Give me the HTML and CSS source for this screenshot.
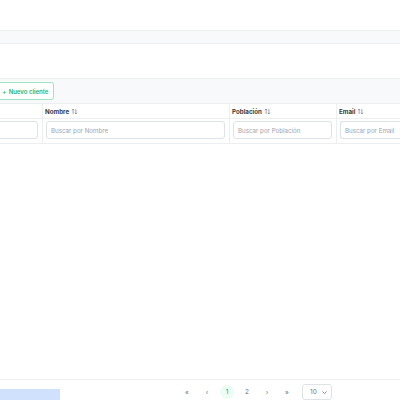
FILE: index.html
```html
<!DOCTYPE html>
<html lang="es">
<head>
<meta charset="utf-8">
<title>Clientes</title>
<link rel="stylesheet" href="styles.css">
</head>
<body>
<div class="page">
  <div class="gap-top"></div>
  <div class="strip"></div>
  <div class="gap-mid"></div>
  <div class="table">
    <div class="toolbar">
      <button class="btn-new"><span class="plus">+</span><span>Nuevo cliente</span></button>
    </div>
    <div class="grid">
      <div class="th"></div>
      <div class="th">Nombre <svg class="sort" viewBox="0 0 10 10"><path d="M3 8.5V1.5M1.3 3.2L3 1.5L4.7 3.2M7 1.5V8.5M5.3 6.8L7 8.5L8.7 6.8"/></svg></div>
      <div class="th">Población <svg class="sort" viewBox="0 0 10 10"><path d="M3 8.5V1.5M1.3 3.2L3 1.5L4.7 3.2M7 1.5V8.5M5.3 6.8L7 8.5L8.7 6.8"/></svg></div>
      <div class="th">Email <svg class="sort" viewBox="0 0 10 10"><path d="M3 8.5V1.5M1.3 3.2L3 1.5L4.7 3.2M7 1.5V8.5M5.3 6.8L7 8.5L8.7 6.8"/></svg></div>
      <div class="tf"><div class="input"></div></div>
      <div class="tf"><div class="input">Buscar por Nombre</div></div>
      <div class="tf"><div class="input">Buscar por Población</div></div>
      <div class="tf last"><div class="input open">Buscar por Email</div></div>
    </div>
  </div>
  <div class="fill"></div>
  <div class="footer">
    <div class="blue"></div>
    <div class="pager">
      <span class="pg">«</span>
      <span class="pg">‹</span>
      <span class="pg active">1</span>
      <span class="pg">2</span>
      <span class="pg">›</span>
      <span class="pg">»</span>
      <span class="rows">10 <svg class="chev" viewBox="0 0 10 10"><path d="M2 3.5L5 6.5L8 3.5"/></svg></span>
    </div>
  </div>
</div>
</body>
</html>
```

FILE: styles.css
```css
html, body {
  margin: 0;
  padding: 0;
  background: #ffffff;
  overflow: hidden;
}
body {
  font-family: Inter, "Noto Sans", sans-serif;
  color: #495057;
}
.page {
  height: 400px;
  width: 400px;
  overflow: hidden;
  display: flex;
  flex-direction: column;
}
.gap-top {
  height: 30px;
}
.strip {
  height: 12px;
  background: #f8f9fa;
  border-top: 1px solid #eceef0;
  border-bottom: 1px solid #eceef0;
}
.gap-mid {
  height: 34px;
}
.table {
  margin-left: -30px;
  width: 430px;
  overflow: hidden;
}
.toolbar {
  background: #f8f9fa;
  border-top: 1px solid #eceef0;
  border-bottom: 1px solid #eceef0;
  padding: 3px 0 3px 0;
  display: flex;
}
.btn-new {
  margin: 0;
  height: 18px;
  width: 84px;
  padding: 0 0 0 31px;
  display: flex;
  align-items: center;
  gap: 2px;
  border: 1px solid #9fe3c4;
  border-radius: 3px;
  background: #ffffff;
  color: #22b573;
  font-family: Inter, "Noto Sans", sans-serif;
  font-size: 6px;
  font-weight: 600;
}
.plus {
  font-weight: 400;
  font-size: 7px;
}
.grid {
  display: grid;
  grid-template-columns: 72px 187px 107px 64px;
  border-bottom: 1px solid #eceef0;
}
.th {
  height: 14px;
  display: flex;
  align-items: center;
  padding-left: 2px;
  font-size: 6.2px;
  font-weight: 700;
  color: #343a40;
  border-bottom: 1px solid #eceef0;
  border-left: 1px solid #eceef0;
  gap: 2px;
}
.th:first-child,
.tf:nth-child(5) {
  border-left: none;
}
.sort {
  width: 7px;
  height: 7px;
  fill: none;
  stroke: #6c757d;
  stroke-width: 0.9;
}
.tf {
  padding: 2px 4px 4px 3px;
  border-left: 1px solid #eceef0;
}
.tf.last {
  padding-right: 0;
}
.input {
  height: 18px;
  box-sizing: border-box;
  border: 1px solid #dfe3e7;
  border-radius: 3px;
  display: flex;
  align-items: center;
  padding-left: 4px;
  font-size: 6.2px;
  color: #9ca3af;
  white-space: nowrap;
}
.input.open {
  border-right: none;
  border-radius: 3px 0 0 3px;
}
.fill {
  flex: 1;
}
.footer {
  height: 20px;
  border-top: 1px solid #eef0f2;
  position: relative;
}
.blue {
  position: absolute;
  left: 0;
  top: 9px;
  width: 60px;
  height: 12px;
  background: #d0e1fd;
}
.pager {
  display: flex;
  align-items: center;
  padding: 4px 0 0 180px;
  gap: 6px;
}
.pg {
  width: 14px;
  height: 14px;
  border-radius: 50%;
  display: flex;
  align-items: center;
  justify-content: center;
  font-size: 6.5px;
  color: #6c757d;
}
.pg.active {
  background: #ecfdf5;
  color: #15a36a;
}
.rows {
  margin-left: 2px;
  width: 30px;
  height: 16px;
  box-sizing: border-box;
  border: 1px solid #dfe3e7;
  border-radius: 3px;
  display: flex;
  align-items: center;
  padding-left: 7px;
  gap: 4px;
  font-size: 6.5px;
  color: #6c757d;
}
.chev {
  width: 7px;
  height: 7px;
  fill: none;
  stroke: #6c757d;
  stroke-width: 1.2;
}
```
